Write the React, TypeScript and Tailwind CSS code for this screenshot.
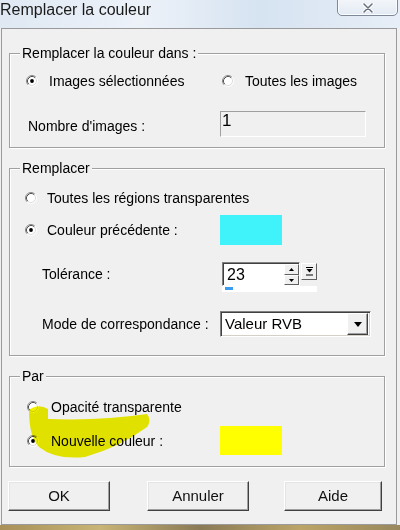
import React from "react";

function Radio({ checked }: { checked?: boolean }) {
  return (
    <svg width="12" height="12" viewBox="0 0 12 12" className="block shrink-0">
      <circle cx="6" cy="6" r="5" fill="#fff" />
      <path d="M2.11 9.89 A5.5 5.5 0 0 1 9.89 2.11" fill="none" stroke="#8a8a8a" />
      <path d="M9.89 2.11 A5.5 5.5 0 0 1 2.11 9.89" fill="none" stroke="#ffffff" />
      <path d="M2.82 9.18 A4.5 4.5 0 0 1 9.18 2.82" fill="none" stroke="#505050" />
      <path d="M9.18 2.82 A4.5 4.5 0 0 1 2.82 9.18" fill="none" stroke="#dcdcdc" />
      {checked && <circle cx="6" cy="6" r="1.9" fill="#000" />}
    </svg>
  );
}

function Group({
  title,
  children,
}: {
  title: string;
  children: React.ReactNode;
}) {
  return (
    <fieldset className="w-[376px] border border-[#a0a0a0] shadow-[inset_1px_1px_0_#fff,1px_1px_0_#fff]">
      <legend className="ml-[10px] px-[2px] bg-[#f0f0f0] text-[14px] leading-[16px]">
        {title}
      </legend>
      {children}
    </fieldset>
  );
}

function Btn({ label, w }: { label: string; w: string }) {
  return (
    <div
      className={`${w} h-[30px] flex items-center justify-center bg-[#f0f0f0] border border-t-white border-l-white border-r-[#404040] border-b-[#404040] shadow-[inset_-1px_-1px_0_#a0a0a0,inset_1px_1px_0_#e4e4e4] text-[15px] leading-[18px] text-[#111]`}
    >
      {label}
    </div>
  );
}

function TinyBtn({ children, cls }: { children: React.ReactNode; cls: string }) {
  return (
    <div
      className={`${cls} flex items-center justify-center bg-[#f0f0f0] border border-t-white border-l-white border-r-[#606060] border-b-[#606060]`}
    >
      {children}
    </div>
  );
}

export default function App() {
  return (
    <div
      className="relative w-[400px] h-[530px] overflow-hidden bg-[#f0f0f0] text-black"
      style={{ fontFamily: '"Liberation Sans", Arial, sans-serif' }}
    >
      {/* Title bar */}
      <div className="h-[28px] flex items-start bg-[linear-gradient(90deg,#dfe8f3,#edf2f9_35%,#d6e3f1_65%,#e7eef7)]">
        <span className="ml-0 text-[16px] leading-[20px] text-[#1a1a1a]">
          Remplacer la couleur
        </span>
        <div className="ml-auto mr-[2px] mt-[-3px] w-[61px] h-[19px] rounded-b-[5px] border border-[#7d8898] bg-[linear-gradient(180deg,#f4f7fb,#e3eaf3)] flex items-center justify-center shadow-[inset_0_0_0_1px_#fafcff]">
          <svg width="12" height="10" viewBox="0 0 12 10" className="mt-[2px]">
            <path d="M2 1 L10 9 M10 1 L2 9" stroke="#ffffff" strokeWidth="3.4" strokeLinecap="round" />
            <path d="M2 1 L10 9 M10 1 L2 9" stroke="#6a7282" strokeWidth="1.6" strokeLinecap="round" />
          </svg>
        </div>
      </div>

      {/* Body */}
      <div className="ml-[1px] w-[396px] h-[497px] border border-[#9a9a9a] pl-[7px] pt-[16px] flex flex-col text-[14px] leading-[16px]">
        {/* Group 1 */}
        <Group title="Remplacer la couleur dans :">
          <div className="pt-[12px] pb-[10px]">
            <div className="flex items-center h-[16px] pl-[16px]">
              <div className="flex items-center w-[196px] gap-[11px]">
                <Radio checked />
                <span>Images sélectionnées</span>
              </div>
              <div className="flex items-center gap-[11px]">
                <Radio />
                <span>Toutes les images</span>
              </div>
            </div>
            <div className="mt-[22px] flex items-center pl-[18px]">
              <span className="w-[192px] pt-[3px]">Nombre d'images :</span>
              <div className="w-[146px] h-[26px] border border-t-[#a0a0a0] border-l-[#a0a0a0] border-r-white border-b-white pl-[1px] text-[17px] leading-[18px]">
                1
              </div>
            </div>
          </div>
        </Group>

        {/* Group 2 */}
        <div className="mt-[12px]">
          <Group title="Remplacer">
            <div className="pt-[14px] pb-[18px]">
              <div className="flex items-center h-[16px] pl-[15px] gap-[10px]">
                <Radio />
                <span>Toutes les régions transparentes</span>
              </div>
              <div className="mt-[9px] flex items-center pl-[15px]">
                <div className="flex items-center w-[195px] gap-[10px]">
                  <Radio checked />
                  <span>Couleur précédente :</span>
                </div>
                <div className="w-[62px] h-[30px] bg-[#40f3fb]" />
              </div>
              <div className="mt-[17px] flex items-start pl-[32px]">
                <div className="w-[180px] h-[24px] flex items-center">Tolérance :</div>
                <div className="flex flex-col">
                  <div className="flex items-start">
                    <div className="w-[78px] h-[24px] flex bg-white border border-t-[#808080] border-l-[#808080] border-r-white border-b-white shadow-[inset_1px_1px_0_#404040]">
                      <span className="flex-1 pl-[4px] pt-[3px] text-[16px] leading-[18px]">23</span>
                      <div className="w-[15px] flex flex-col mt-[1px]">
                        <TinyBtn cls="h-[11px]">
                          <svg width="5" height="3" viewBox="0 0 5 3">
                            <path d="M0 3 L2.5 0 L5 3 Z" fill="#000" />
                          </svg>
                        </TinyBtn>
                        <TinyBtn cls="h-[10px]">
                          <svg width="5" height="3" viewBox="0 0 5 3">
                            <path d="M0 0 L5 0 L2.5 3 Z" fill="#000" />
                          </svg>
                        </TinyBtn>
                      </div>
                    </div>
                    <TinyBtn cls="w-[16px] h-[17px] ml-[1px] mt-[1px]">
                      <svg width="7" height="9" viewBox="0 0 7 9">
                        <path d="M0 0.5 H7" stroke="#000" />
                        <path d="M0.5 2 L6.5 2 L3.5 5.5 Z" fill="#000" />
                        <path d="M0 8 H7" stroke="#000" />
                      </svg>
                    </TinyBtn>
                  </div>
                  <div className="w-[95px] h-[6px] bg-white flex items-start">
                    <div className="ml-[3px] mt-[1px] w-[8px] h-[3px] bg-[#3c9cf0]" />
                  </div>
                </div>
              </div>
              <div className="mt-[19px] flex items-center pl-[32px]">
                <span className="w-[178px]">Mode de correspondance :</span>
                <div className="w-[151px] h-[26px] flex items-center bg-white border border-t-[#808080] border-l-[#808080] border-r-white border-b-white shadow-[inset_1px_1px_0_#404040,inset_-1px_-1px_0_#d4d0c8]">
                  <span className="flex-1 pl-[4px] text-[15px] leading-[18px]">Valeur RVB</span>
                  <div className="mr-[2px] w-[21px] h-[22px] flex items-center justify-center bg-[#f0f0f0] border border-t-white border-l-white border-r-[#404040] border-b-[#404040] shadow-[inset_-1px_-1px_0_#a0a0a0]">
                    <svg width="8" height="5" viewBox="0 0 8 5">
                      <path d="M0 0 L8 0 L4 5 Z" fill="#000" />
                    </svg>
                  </div>
                </div>
              </div>
            </div>
          </Group>
        </div>

        {/* Group 3 */}
        <div className="mt-[12px]">
          <Group title="Par">
            <div className="pt-[15px] pb-[11px]">
              <div className="flex items-center h-[16px] pl-[17px] gap-[12px]">
                <Radio />
                <span>Opacité transparente</span>
              </div>
              <div className="mt-[11px] flex items-center pl-[17px]">
                <div className="flex items-center w-[193px] gap-[12px]">
                  <Radio checked />
                  <span>Nouvelle couleur :</span>
                </div>
                <div className="w-[62px] h-[29px] bg-[#ffff00]" />
              </div>
            </div>
          </Group>
        </div>

        {/* Buttons */}
        <div className="mt-[14px] ml-[-1px] flex">
          <Btn label="OK" w="w-[102px]" />
          <div className="ml-[37px]">
            <Btn label="Annuler" w="w-[102px]" />
          </div>
          <div className="ml-[35px]">
            <Btn label="Aide" w="w-[98px]" />
          </div>
        </div>
      </div>
      <div className="h-[5px] bg-[linear-gradient(90deg,#a89058,#c8b476,#8a7a56,#bca468,#98885c)]" />

      {/* Yellow highlighter stroke drawn over the dialog */}
      <svg
        width="400"
        height="530"
        viewBox="0 0 400 530"
        className="pointer-events-none absolute left-0 top-0 mix-blend-multiply"
      >
        <path
          d="M29 410 Q38 403 48 409 L48 419 Q100 421 147 414 Q152 420 147 427 Q120 447 85 457 Q55 460 39 447 Q29 437 29 410 Z"
          fill="#f0f000"
        />
      </svg>
    </div>
  );
}
